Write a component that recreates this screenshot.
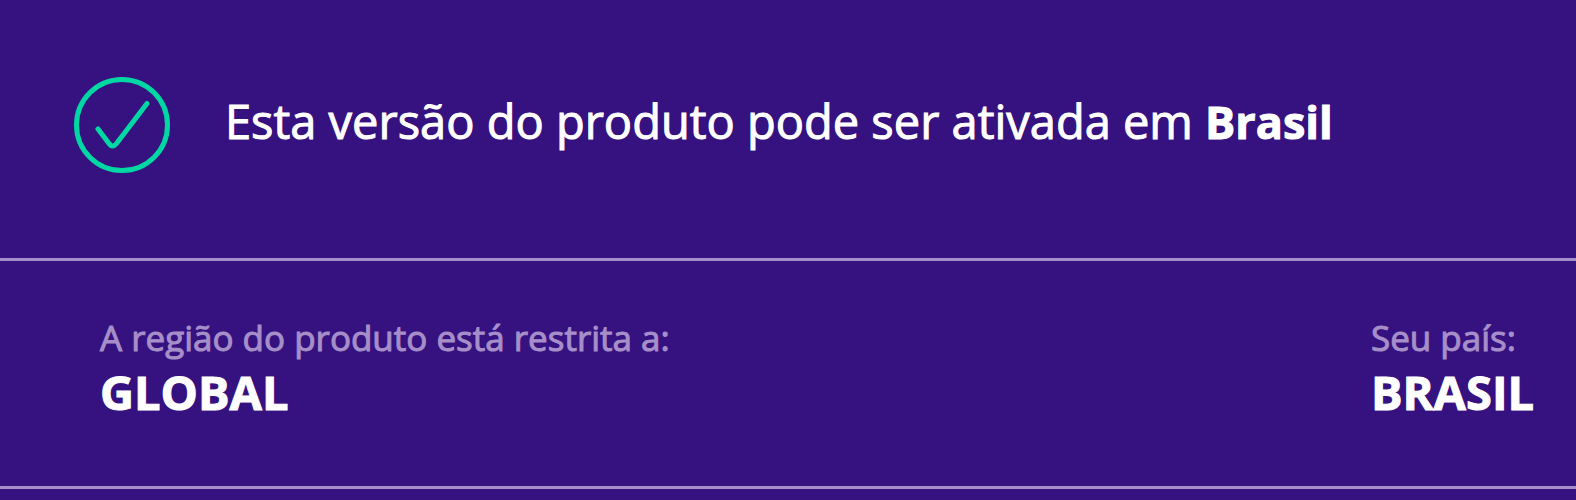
<main>
  <section class="status">
    <svg class="check" viewBox="0 0 98 98" aria-hidden="true">
      <circle cx="49" cy="49" r="45.5" />
      <path d="M25 53L36 67.500Q39.500 72.500 43.500 67.500L74 27.500" />
    </svg>
    <p>Esta versão do produto pode ser ativada em <strong>Brasil</strong></p>
  </section>
  <dl class="regions">
    <div>
      <dt>A região do produto está restrita a:</dt>
      <dd>GLOBAL</dd>
    </div>
    <div>
      <dt>Seu país:</dt>
      <dd>BRASIL</dd>
    </div>
  </dl>
</main>

<style>
  :global(body) {
    margin: 0;
    background: #361180;
  }
  main {
    min-height: 100vh;
    box-sizing: border-box;
    overflow: hidden;
    background: #361180;
    color: #fff;
    font-family: "Open Sans", sans-serif;
  }
  .status {
    display: flex;
    align-items: center;
    gap: 54px;
    padding: 76px 72px 84px 73px;
    border-bottom: 3px solid #a68fc9;
  }
  .check {
    flex: none;
    width: 98px;
    height: 98px;
    fill: none;
    stroke: #00d8a4;
    stroke-width: 5;
    stroke-linecap: round;
    stroke-linejoin: round;
  }
  p {
    margin: 0;
    padding-bottom: 8px;
    font-size: 47px;
    line-height: 60px;
    -webkit-text-stroke: 1px currentColor;
  }
  strong {
    font-size: 45px;
    font-weight: 700;
  }
  .regions {
    display: flex;
    justify-content: space-between;
    margin: 0;
    padding: 52px 42px 65px 100px;
    border-bottom: 3px solid #a68fc9;
  }
  dt {
    color: #a68fc9;
    font-size: 35px;
    line-height: 50px;
    -webkit-text-stroke: 1px currentColor;
  }
  dd {
    margin: 0;
    font-size: 47px;
    font-weight: 700;
    line-height: 58px;
    -webkit-text-stroke: 1px currentColor;
  }
</style>
